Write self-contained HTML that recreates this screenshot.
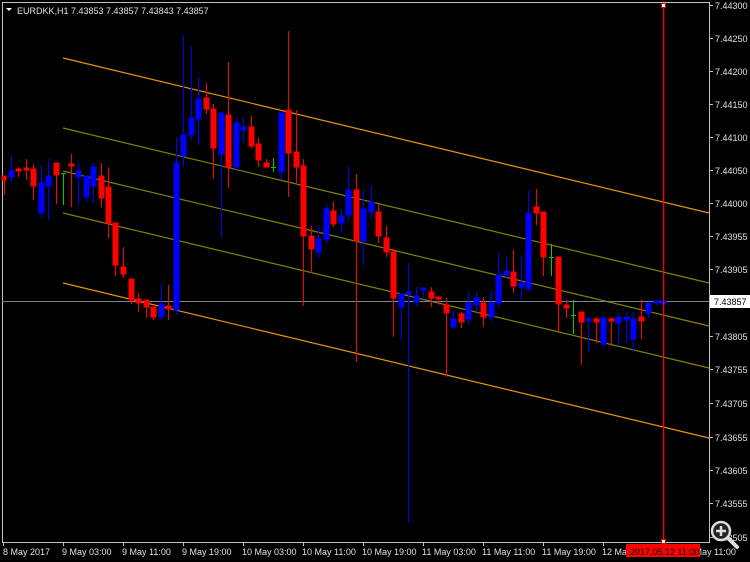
<!DOCTYPE html>
<html><head><meta charset="utf-8"><style>
html,body{margin:0;padding:0;background:#000;width:750px;height:562px;overflow:hidden}
svg{display:block}
text{font-family:"Liberation Sans","DejaVu Sans",sans-serif;font-size:9px;fill:#e0e0e0}
</style></head><body>
<svg width="750" height="562" viewBox="0 0 750 562" xmlns="http://www.w3.org/2000/svg">
<rect width="750" height="562" fill="#000"/>
<line x1="2.5" y1="2" x2="2.5" y2="543" stroke="#c0c0c0"/>
<line x1="2" y1="2.5" x2="710" y2="2.5" stroke="#c0c0c0"/>
<line x1="709.5" y1="2" x2="709.5" y2="543" stroke="#c0c0c0"/>
<line x1="2" y1="542.5" x2="710" y2="542.5" stroke="#c0c0c0"/>
<g stroke-width="1.2">
<line x1="63" y1="58" x2="709" y2="213" stroke="#e8960a"/>
<line x1="63" y1="128" x2="709" y2="283" stroke="#858000"/>
<line x1="63" y1="171" x2="709" y2="326" stroke="#858000"/>
<line x1="63" y1="213" x2="709" y2="368" stroke="#858000"/>
<line x1="63" y1="283" x2="709" y2="438" stroke="#e8960a"/>
</g>
<line x1="2" y1="301.5" x2="709" y2="301.5" stroke="#7a8593"/>
<g stroke-width="1" shape-rendering="crispEdges">
<g stroke="#ff0000" fill="#ff0000">
<line x1="4.5" y1="176" x2="4.5" y2="195"/><rect x="2" y="176" width="4" height="4"/>
<line x1="18.5" y1="167" x2="18.5" y2="177"/><rect x="16" y="169" width="5" height="2"/>
<line x1="26.5" y1="159" x2="26.5" y2="180"/><rect x="24" y="168" width="5" height="2"/>
<line x1="33.5" y1="164" x2="33.5" y2="200"/><rect x="31" y="169" width="5" height="17"/>
<line x1="56.5" y1="163" x2="56.5" y2="204"/><rect x="54" y="163" width="5" height="12"/>
<line x1="71.5" y1="154" x2="71.5" y2="207"/><rect x="69" y="164" width="5" height="2"/>
<line x1="101.5" y1="163" x2="101.5" y2="207"/><rect x="99" y="176" width="5" height="22"/>
<line x1="108.5" y1="167" x2="108.5" y2="238"/><rect x="106" y="187" width="5" height="36"/>
<line x1="115.5" y1="223" x2="115.5" y2="276"/><rect x="113" y="223" width="5" height="42"/>
<line x1="123.5" y1="247" x2="123.5" y2="278"/><rect x="121" y="267" width="5" height="7"/>
<line x1="131.5" y1="279" x2="131.5" y2="304"/><rect x="129" y="279" width="5" height="21"/>
<line x1="138.5" y1="293" x2="138.5" y2="312"/><rect x="136" y="299" width="5" height="4"/>
<line x1="146.5" y1="300" x2="146.5" y2="318"/><rect x="144" y="300" width="5" height="7"/>
<line x1="153.5" y1="307" x2="153.5" y2="320"/><rect x="151" y="307" width="5" height="10"/>
<line x1="168.5" y1="285" x2="168.5" y2="320"/><rect x="166" y="306" width="5" height="3"/>
<line x1="206.5" y1="83" x2="206.5" y2="114"/><rect x="204" y="98" width="5" height="11"/>
<line x1="213.5" y1="104" x2="213.5" y2="179"/><rect x="211" y="109" width="5" height="39"/>
<line x1="228.5" y1="62" x2="228.5" y2="188"/><rect x="226" y="115" width="5" height="52"/>
<line x1="251.5" y1="116" x2="251.5" y2="148"/><rect x="249" y="127" width="5" height="19"/>
<line x1="258.5" y1="138" x2="258.5" y2="167"/><rect x="256" y="144" width="5" height="16"/>
<line x1="266.5" y1="159" x2="266.5" y2="167"/><rect x="264" y="163" width="5" height="4"/>
<line x1="288.5" y1="31" x2="288.5" y2="197"/><rect x="286" y="110" width="5" height="43"/>
<line x1="296.5" y1="110" x2="296.5" y2="183"/><rect x="294" y="152" width="5" height="15"/>
<line x1="303.5" y1="159" x2="303.5" y2="306"/><rect x="301" y="166" width="5" height="70"/>
<line x1="311.5" y1="226" x2="311.5" y2="273"/><rect x="309" y="236" width="5" height="13"/>
<line x1="333.5" y1="202" x2="333.5" y2="227"/><rect x="331" y="211" width="5" height="13"/>
<line x1="356.5" y1="174" x2="356.5" y2="362"/><rect x="354" y="190" width="5" height="51"/>
<line x1="378.5" y1="204" x2="378.5" y2="243"/><rect x="376" y="212" width="5" height="24"/>
<line x1="386.5" y1="226" x2="386.5" y2="257"/><rect x="384" y="238" width="5" height="14"/>
<line x1="393.5" y1="249" x2="393.5" y2="337"/><rect x="391" y="252" width="5" height="46"/>
<line x1="431.5" y1="287" x2="431.5" y2="307"/><rect x="429" y="292" width="5" height="6"/>
<line x1="438.5" y1="297" x2="438.5" y2="305"/><rect x="436" y="297" width="5" height="2"/>
<line x1="446.5" y1="298" x2="446.5" y2="377"/><rect x="444" y="305" width="5" height="8"/>
<line x1="461.5" y1="312" x2="461.5" y2="328"/><rect x="459" y="314" width="5" height="8"/>
<line x1="483.5" y1="297" x2="483.5" y2="327"/><rect x="481" y="303" width="5" height="14"/>
<line x1="513.5" y1="250" x2="513.5" y2="293"/><rect x="511" y="272" width="5" height="14"/>
<line x1="536.5" y1="189" x2="536.5" y2="225"/><rect x="534" y="207" width="5" height="6"/>
<line x1="543.5" y1="212" x2="543.5" y2="276"/><rect x="541" y="212" width="5" height="45"/>
<line x1="558.5" y1="257" x2="558.5" y2="332"/><rect x="556" y="257" width="5" height="47"/>
<line x1="566.5" y1="300" x2="566.5" y2="318"/><rect x="564" y="305" width="5" height="3"/>
<line x1="581.5" y1="312" x2="581.5" y2="365"/><rect x="579" y="312" width="5" height="10"/>
<line x1="596.5" y1="317" x2="596.5" y2="343"/><rect x="594" y="319" width="5" height="3"/>
<line x1="611.5" y1="317" x2="611.5" y2="346"/><rect x="609" y="319" width="5" height="2"/>
<line x1="641.5" y1="300" x2="641.5" y2="339"/><rect x="639" y="317" width="5" height="4"/>
</g>
<g stroke="#0000ff" fill="#0000ff">
<line x1="11.5" y1="156" x2="11.5" y2="182"/><rect x="9" y="171" width="5" height="6"/>
<line x1="41.5" y1="165" x2="41.5" y2="218"/><rect x="39" y="183" width="5" height="30"/>
<line x1="48.5" y1="159" x2="48.5" y2="220"/><rect x="46" y="176" width="5" height="10"/>
<line x1="78.5" y1="163" x2="78.5" y2="205"/><rect x="76" y="171" width="5" height="6"/>
<line x1="86.5" y1="176" x2="86.5" y2="202"/><rect x="84" y="176" width="5" height="21"/>
<line x1="93.5" y1="163" x2="93.5" y2="203"/><rect x="91" y="167" width="5" height="19"/>
<line x1="161.5" y1="284" x2="161.5" y2="320"/><rect x="159" y="304" width="5" height="13"/>
<line x1="176.5" y1="137" x2="176.5" y2="315"/><rect x="174" y="163" width="5" height="147"/>
<line x1="183.5" y1="35" x2="183.5" y2="167"/><rect x="181" y="135" width="5" height="21"/>
<line x1="191.5" y1="46" x2="191.5" y2="140"/><rect x="189" y="118" width="5" height="17"/>
<line x1="198.5" y1="77" x2="198.5" y2="145"/><rect x="196" y="99" width="5" height="20"/>
<line x1="221.5" y1="113" x2="221.5" y2="237"/><rect x="219" y="113" width="5" height="41"/>
<line x1="236.5" y1="118" x2="236.5" y2="170"/><rect x="234" y="123" width="5" height="44"/>
<line x1="243.5" y1="117" x2="243.5" y2="142"/><rect x="241" y="127" width="5" height="3"/>
<line x1="281.5" y1="113" x2="281.5" y2="180"/><rect x="279" y="113" width="5" height="59"/>
<line x1="318.5" y1="226" x2="318.5" y2="258"/><rect x="316" y="239" width="5" height="13"/>
<line x1="326.5" y1="204" x2="326.5" y2="243"/><rect x="324" y="209" width="5" height="30"/>
<line x1="341.5" y1="209" x2="341.5" y2="233"/><rect x="339" y="216" width="5" height="7"/>
<line x1="348.5" y1="166" x2="348.5" y2="221"/><rect x="346" y="190" width="5" height="25"/>
<line x1="363.5" y1="190" x2="363.5" y2="265"/><rect x="361" y="209" width="5" height="32"/>
<line x1="371.5" y1="186" x2="371.5" y2="218"/><rect x="369" y="202" width="5" height="10"/>
<line x1="401.5" y1="294" x2="401.5" y2="340"/><rect x="399" y="294" width="5" height="13"/>
<line x1="408.5" y1="263" x2="408.5" y2="523"/><rect x="406" y="292" width="5" height="2"/>
<line x1="416.5" y1="287" x2="416.5" y2="307"/><rect x="414" y="296" width="5" height="6"/>
<line x1="423.5" y1="288" x2="423.5" y2="297"/><rect x="421" y="288" width="5" height="2"/>
<line x1="453.5" y1="310" x2="453.5" y2="327"/><rect x="451" y="319" width="5" height="8"/>
<line x1="468.5" y1="291" x2="468.5" y2="324"/><rect x="466" y="303" width="5" height="16"/>
<line x1="476.5" y1="292" x2="476.5" y2="312"/><rect x="474" y="298" width="5" height="7"/>
<line x1="491.5" y1="291" x2="491.5" y2="321"/><rect x="489" y="303" width="5" height="14"/>
<line x1="498.5" y1="252" x2="498.5" y2="308"/><rect x="496" y="275" width="5" height="28"/>
<line x1="506.5" y1="257" x2="506.5" y2="279"/><rect x="504" y="271" width="5" height="4"/>
<line x1="521.5" y1="257" x2="521.5" y2="300"/><rect x="519" y="283" width="5" height="4"/>
<line x1="528.5" y1="190" x2="528.5" y2="291"/><rect x="526" y="213" width="5" height="76"/>
<line x1="588.5" y1="317" x2="588.5" y2="352"/><rect x="586" y="319" width="5" height="2"/>
<line x1="603.5" y1="315" x2="603.5" y2="347"/><rect x="601" y="318" width="5" height="26"/>
<line x1="618.5" y1="313" x2="618.5" y2="346"/><rect x="616" y="317" width="5" height="6"/>
<line x1="626.5" y1="313" x2="626.5" y2="343"/><rect x="624" y="317" width="5" height="3"/>
<line x1="633.5" y1="312" x2="633.5" y2="352"/><rect x="631" y="319" width="5" height="20"/>
<line x1="648.5" y1="303" x2="648.5" y2="317"/><rect x="646" y="303" width="5" height="10"/>
<line x1="656.5" y1="300" x2="656.5" y2="306"/><rect x="654" y="301" width="5" height="2"/>
<rect x="661" y="301" width="5" height="3"/>
</g>
<g stroke="#00d000">
<line x1="63.5" y1="173" x2="63.5" y2="205"/><line x1="61" y1="173.5" x2="66" y2="173.5"/>
<line x1="273.5" y1="158" x2="273.5" y2="172"/><line x1="271" y1="167.5" x2="276" y2="167.5"/>
<line x1="551.5" y1="244" x2="551.5" y2="276"/><line x1="549" y1="257.5" x2="554" y2="257.5"/>
<line x1="573.5" y1="300" x2="573.5" y2="334"/><line x1="571" y1="315.5" x2="576" y2="315.5"/>
</g>
</g>
<rect x="663" y="4" width="1.3" height="538" fill="#ff0000"/>
<rect x="661.5" y="3.5" width="4" height="4" fill="#fff" stroke="#e00000"/>
<rect x="661.5" y="539.5" width="4" height="4" fill="#fff" stroke="#e00000"/>
<polygon points="6,8 12,8 9,11" fill="#fff"/>
<text x="17" y="14">EURDKK,H1  7.43853 7.43857 7.43843 7.43857</text>
<g stroke="#c0c0c0">
<line x1="710" y1="5.5" x2="713" y2="5.5"/><line x1="710" y1="38.5" x2="713" y2="38.5"/>
<line x1="710" y1="71.5" x2="713" y2="71.5"/><line x1="710" y1="104.5" x2="713" y2="104.5"/>
<line x1="710" y1="137.5" x2="713" y2="137.5"/><line x1="710" y1="170.5" x2="713" y2="170.5"/>
<line x1="710" y1="203.5" x2="713" y2="203.5"/><line x1="710" y1="236.5" x2="713" y2="236.5"/>
<line x1="710" y1="269.5" x2="713" y2="269.5"/><line x1="710" y1="336.5" x2="713" y2="336.5"/>
<line x1="710" y1="369.5" x2="713" y2="369.5"/><line x1="710" y1="403.5" x2="713" y2="403.5"/>
<line x1="710" y1="437.5" x2="713" y2="437.5"/><line x1="710" y1="470.5" x2="713" y2="470.5"/>
<line x1="710" y1="503.5" x2="713" y2="503.5"/><line x1="710" y1="537.5" x2="713" y2="537.5"/>
</g>
<g>
<text x="715" y="9">7.44300</text><text x="715" y="42">7.44250</text>
<text x="715" y="75">7.44200</text><text x="715" y="108">7.44150</text>
<text x="715" y="141">7.44100</text><text x="715" y="174">7.44050</text>
<text x="715" y="207">7.44000</text><text x="715" y="240">7.43955</text>
<text x="715" y="273">7.43905</text><text x="715" y="340">7.43805</text>
<text x="715" y="373">7.43755</text><text x="715" y="407">7.43705</text>
<text x="715" y="441">7.43655</text><text x="715" y="474">7.43605</text>
<text x="715" y="507">7.43555</text><text x="715" y="541">7.43505</text>
</g>
<rect x="710" y="295" width="40" height="13" fill="#fff"/>
<text x="714" y="305" style="fill:#000">7.43857</text>
<g stroke="#c0c0c0">
<line x1="3.5" y1="543" x2="3.5" y2="546"/><line x1="63.5" y1="543" x2="63.5" y2="546"/>
<line x1="123.5" y1="543" x2="123.5" y2="546"/><line x1="183.5" y1="543" x2="183.5" y2="546"/>
<line x1="243.5" y1="543" x2="243.5" y2="546"/><line x1="303.5" y1="543" x2="303.5" y2="546"/>
<line x1="363.5" y1="543" x2="363.5" y2="546"/><line x1="423.5" y1="543" x2="423.5" y2="546"/>
<line x1="483.5" y1="543" x2="483.5" y2="546"/><line x1="543.5" y1="543" x2="543.5" y2="546"/>
<line x1="603.5" y1="543" x2="603.5" y2="546"/>
</g>
<g>
<text x="3" y="555">8 May 2017</text><text x="62" y="555">9 May 03:00</text>
<text x="122" y="555">9 May 11:00</text><text x="182" y="555">9 May 19:00</text>
<text x="242" y="555">10 May 03:00</text><text x="302" y="555">10 May 11:00</text>
<text x="362" y="555">10 May 19:00</text><text x="422" y="555">11 May 03:00</text>
<text x="482" y="555">11 May 11:00</text><text x="542" y="555">11 May 19:00</text>
<text x="602" y="555">12 May 03:00</text><text x="682" y="555">12 May 11:00</text>
</g>
<rect x="626" y="544" width="74" height="13" fill="#ff0000"/>
<text x="630" y="555" style="fill:#000">2017.05.12 11:00</text>
<circle cx="721" cy="531" r="9" fill="#222" stroke="#ddd" stroke-width="2.5"/>
<line x1="728" y1="538" x2="737" y2="547" stroke="#ddd" stroke-width="4" stroke-linecap="round"/>
<line x1="716" y1="531" x2="726" y2="531" stroke="#ddd" stroke-width="2.5"/>
<line x1="721" y1="526" x2="721" y2="536" stroke="#ddd" stroke-width="2.5"/>
</svg>
</body></html>
